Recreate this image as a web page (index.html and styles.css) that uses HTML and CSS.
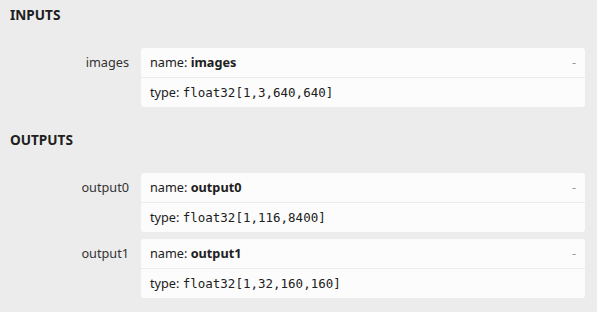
FILE: index.html
```html
<!DOCTYPE html>
<html lang="en">

<head>
    <meta charset="UTF-8" />
    <meta name="viewport" content="width=device-width, initial-scale=1.0" />
    <title>Model Properties</title>
    <link rel="stylesheet" href="styles.css">
</head>

<body>
    <div class="sidebar">
        <div class="section">
            <div class="section-title">INPUTS</div>
            <div class="item">
                <div class="item-name">images</div>
                <div class="item-value">
                    <div class="value-row">
                        <span>name: <b>images</b></span>
                        <span class="toggle">-</span>
                    </div>
                    <div class="value-row">
                        <span>type: <code>float32[1,3,640,640]</code></span>
                    </div>
                </div>
            </div>
        </div>

        <div class="section">
            <div class="section-title">OUTPUTS</div>
            <div class="item">
                <div class="item-name">output0</div>
                <div class="item-value">
                    <div class="value-row">
                        <span>name: <b>output0</b></span>
                        <span class="toggle">-</span>
                    </div>
                    <div class="value-row">
                        <span>type: <code>float32[1,116,8400]</code></span>
                    </div>
                </div>
            </div>
            <div class="item">
                <div class="item-name">output1</div>
                <div class="item-value">
                    <div class="value-row">
                        <span>name: <b>output1</b></span>
                        <span class="toggle">-</span>
                    </div>
                    <div class="value-row">
                        <span>type: <code>float32[1,32,160,160]</code></span>
                    </div>
                </div>
            </div>
        </div>
    </div>
</body>

</html>
```

FILE: styles.css
```css
body {
    margin: 0;
    background-color: #ececec;
    font-family: "Noto Sans", "Open Sans", sans-serif;
    font-size: 12.7px;
    color: #202020;
}

.sidebar {
    padding: 0 12px 0 0;
}

.section {
    margin-bottom: 18px;
}

.section-title {
    height: 30px;
    line-height: 30px;
    padding-left: 10px;
    font-size: 13.6px;
    font-weight: bold;
    margin-bottom: 18px;
}

.item {
    display: flex;
    margin-bottom: 7px;
}

.item-name {
    width: 141px;
    flex-shrink: 0;
    padding-right: 12px;
    box-sizing: border-box;
    text-align: right;
    line-height: 29px;
    color: #333;
}

.item-value {
    flex: 1;
    background-color: #fcfcfc;
    border-radius: 3px;
}

.value-row {
    display: flex;
    justify-content: space-between;
    height: 29px;
    line-height: 29px;
    padding: 0 9px;
}

.value-row + .value-row {
    border-top: 1px solid #ececec;
}

.value-row b {
    font-weight: bold;
}

.value-row code {
    font-family: "DejaVu Sans Mono", "Liberation Mono", monospace;
    font-size: 12.5px;
}

.toggle {
    color: #999;
}
```
